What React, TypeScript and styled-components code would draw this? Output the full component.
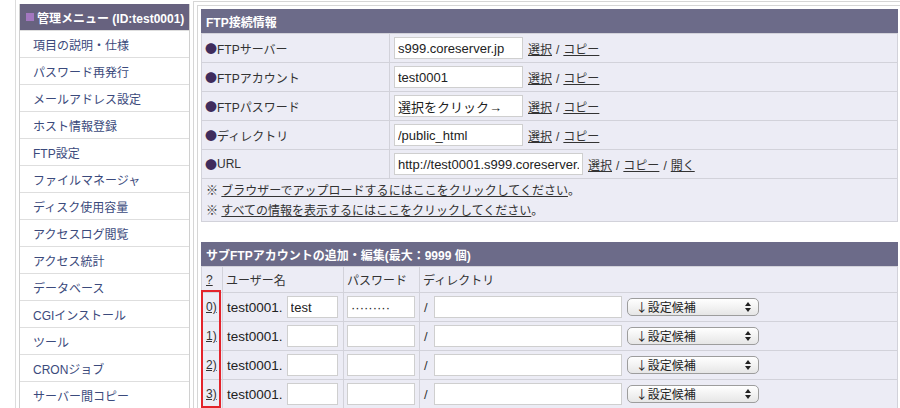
import React from 'react';
import styled, { createGlobalStyle } from 'styled-components';

const menuItems = [
  '項目の説明・仕様',
  'パスワード再発行',
  'メールアドレス設定',
  'ホスト情報登録',
  'FTP設定',
  'ファイルマネージャ',
  'ディスク使用容量',
  'アクセスログ閲覧',
  'アクセス統計',
  'データベース',
  'CGIインストール',
  'ツール',
  'CRONジョブ',
  'サーバー間コピー',
];

const ftpRows = [
  { label: 'FTPサーバー', value: 's999.coreserver.jp' },
  { label: 'FTPアカウント', value: 'test0001' },
  { label: 'FTPパスワード', value: '選択をクリック→' },
  { label: 'ディレクトリ', value: '/public_html' },
  { label: 'URL', value: 'http://test0001.s999.coreserver.jp/', wide: true, open: true },
];

const subRows = [
  { no: '0)', user: 'test', pass: '·········' },
  { no: '1)', user: '', pass: '' },
  { no: '2)', user: '', pass: '' },
  { no: '3)', user: '', pass: '' },
];

const GlobalStyle = createGlobalStyle`
  html, body {
    margin: 0;
    padding: 0;
    background: #fff;
    overflow: hidden;
  }
  body {
    font-family: "Liberation Sans", "Noto Sans CJK JP", sans-serif;
    font-size: 12px;
    color: #333;
  }
`;

const Page = styled.div`
  display: flex;
  align-items: flex-start;
  width: 920px;
  height: 408px;
  overflow: hidden;
`;

const LeftColumn = styled.div`
  margin-left: 15px;
  border-left: 1px solid #dcdcdc;
  padding: 4px 3px 0 3px;
  height: 404px;
`;

const Sidebar = styled.nav`
  width: 171px;
  box-sizing: border-box;
  border: 1px solid #d0d0d0;
  border-top: none;
  border-bottom: none;
  background: #fff;
`;

const SideHeader = styled.div`
  height: 26px;
  display: flex;
  align-items: center;
  gap: 3px;
  padding-left: 6px;
  background: #67627f;
  color: #fff;
  font-weight: bold;
  font-size: 12px;
  white-space: nowrap;
`;

const Square = styled.span`
  width: 8px;
  height: 8px;
  background: #a377c0;
  display: inline-block;
`;

const SideItem = styled.div`
  height: 26px;
  border-top: 1px solid #dedede;
  display: flex;
  align-items: center;
  padding-left: 13px;
  color: #3b4a7c;
  font-size: 12px;
`;

const OuterFrame = styled.div`
  margin-top: 1px;
  border: 1px solid #d6d6d6;
  padding: 3px;
`;

const InnerFrame = styled.div`
  border: 1px solid #d6d6d6;
  padding: 3px;
`;

const Panel = styled.section`
  width: 697px;
  box-sizing: border-box;
  border: 1px solid #d2d2da;
  border-top: none;
  background: #ececf5;
  position: relative;
`;

const SubPanel = styled(Panel)`
  margin-top: 20px;
`;

const PanelHeader = styled.div`
  height: 24px;
  margin: 0 -1px;
  display: flex;
  align-items: center;
  padding-left: 5px;
  background: #6c6b89;
  color: #fff;
  font-weight: bold;
  font-size: 12px;
`;

const InfoRow = styled.div`
  display: grid;
  grid-template-columns: 187px 1fr;
  height: 29px;
  box-sizing: border-box;
  border-top: 1px solid #d2d2da;
`;

const LabelCell = styled.div`
  display: flex;
  align-items: center;
  padding-left: 3px;
  font-size: 12px;
`;

const Bullet = styled.span`
  font-family: "Noto Sans CJK JP", sans-serif;
  font-size: 12px;
  color: #3f2c5c;
`;

const ValueCell = styled.div`
  display: flex;
  align-items: center;
  gap: 5px;
  padding-left: 4px;
  border-left: 1px solid #d2d2da;
  white-space: nowrap;
`;

const Field = styled.input<{ $w: number }>`
  width: ${(p) => p.$w}px;
  height: 22px;
  box-sizing: border-box;
  border: 1px solid #cfcfcf;
  background: #fff;
  padding: 0 3px;
  font-family: "Liberation Sans", "Noto Sans CJK JP", sans-serif;
  font-size: 13px;
  color: #222;
  outline: none;
`;

const Link = styled.a`
  color: #333;
  text-decoration: underline;
  cursor: pointer;
`;

const Sep = styled.span`
  margin: 0 4px;
`;

const NotesRow = styled.div`
  border-top: 1px solid #d2d2da;
  height: 43px;
  box-sizing: border-box;
  padding: 2px 4px 0;
  line-height: 20px;
  font-size: 12px;
`;

const ColsRow = styled.div<{ $h: number }>`
  display: grid;
  grid-template-columns: 20px 121px 76px 1fr;
  height: ${(p) => p.$h}px;
  box-sizing: border-box;
  border-top: 1px solid #d2d2da;
`;

const Cell = styled.div<{ $first?: boolean }>`
  display: flex;
  align-items: center;
  gap: 4px;
  padding-left: ${(p) => (p.$first ? 4 : 3)}px;
  border-left: ${(p) => (p.$first ? 'none' : '1px solid #d2d2da')};
  white-space: nowrap;
  font-size: 12px;
`;

const Prefix = styled.span`
  font-size: 13.5px;
  color: #222;
  margin-left: 1px;
`;

const Slash = styled.span`
  font-size: 13px;
  margin: 0 2px 0 1px;
`;

const SelectWrap = styled.span`
  position: relative;
  display: inline-flex;
  margin-left: 1px;
`;

const Select = styled.select`
  appearance: none;
  -webkit-appearance: none;
  width: 132px;
  height: 18px;
  border: 1px solid #9d9d9d;
  border-radius: 5px;
  background: linear-gradient(#ffffff, #e6e6e6);
  padding: 0 0 0 8px;
  font-family: "Noto Sans CJK JP", sans-serif;
  font-size: 12px;
  line-height: 16px;
  color: #222;
  outline: none;
`;

const ArrowIcon = styled.svg`
  position: absolute;
  right: 8px;
  top: 4px;
  pointer-events: none;
`;

const Marker = styled.div`
  position: absolute;
  left: -1px;
  top: 48px;
  width: 20px;
  height: 118px;
  box-sizing: border-box;
  border: 2px solid #e3232b;
  pointer-events: none;
`;

const SelectBox = () => (
  <SelectWrap>
    <Select defaultValue="0">
      <option value="0">↓設定候補</option>
    </Select>
    <ArrowIcon width="6" height="10" viewBox="0 0 6 10">
      <path d="M3 0 L6 4 L0 4 Z M3 10 L6 6 L0 6 Z" fill="#222" />
    </ArrowIcon>
  </SelectWrap>
);

export default function App() {
  return (
    <>
      <GlobalStyle />
      <Page>
        <LeftColumn>
          <Sidebar>
            <SideHeader>
              <Square />
              管理メニュー (ID:test0001)
            </SideHeader>
            {menuItems.map((item) => (
              <SideItem key={item}>{item}</SideItem>
            ))}
          </Sidebar>
        </LeftColumn>

        <OuterFrame>
          <InnerFrame>
            <Panel>
              <PanelHeader>FTP接続情報</PanelHeader>
              {ftpRows.map((row) => (
                <InfoRow key={row.label}>
                  <LabelCell>
                    <Bullet>●</Bullet>
                    {row.label}
                  </LabelCell>
                  <ValueCell>
                    <Field $w={row.wide ? 189 : 129} readOnly value={row.value} />
                    <span>
                      <Link>選択</Link>
                      <Sep>/</Sep>
                      <Link>コピー</Link>
                      {row.open && (
                        <>
                          <Sep>/</Sep>
                          <Link>開く</Link>
                        </>
                      )}
                    </span>
                  </ValueCell>
                </InfoRow>
              ))}
              <NotesRow>
                <div>
                  ※ <Link>ブラウザーでアップロードするにはここをクリックしてください</Link>。
                </div>
                <div>
                  ※ <Link>すべての情報を表示するにはここをクリックしてください</Link>。
                </div>
              </NotesRow>
            </Panel>

            <SubPanel>
              <PanelHeader>サブFTPアカウントの追加・編集(最大：9999 個)</PanelHeader>
              <ColsRow $h={26}>
                <Cell $first>
                  <Link>?</Link>
                </Cell>
                <Cell>ユーザー名</Cell>
                <Cell>パスワード</Cell>
                <Cell>ディレクトリ</Cell>
              </ColsRow>
              {subRows.map((row) => (
                <ColsRow $h={29} key={row.no}>
                  <Cell $first>
                    <Link>{row.no}</Link>
                  </Cell>
                  <Cell>
                    <Prefix>test0001.</Prefix>
                    <Field $w={51} readOnly value={row.user} />
                  </Cell>
                  <Cell>
                    <Field $w={68} readOnly value={row.pass} />
                  </Cell>
                  <Cell>
                    <Slash>/</Slash>
                    <Field $w={188} readOnly value="" />
                    <SelectBox />
                  </Cell>
                </ColsRow>
              ))}
              <Marker />
            </SubPanel>
          </InnerFrame>
        </OuterFrame>
      </Page>
    </>
  );
}
